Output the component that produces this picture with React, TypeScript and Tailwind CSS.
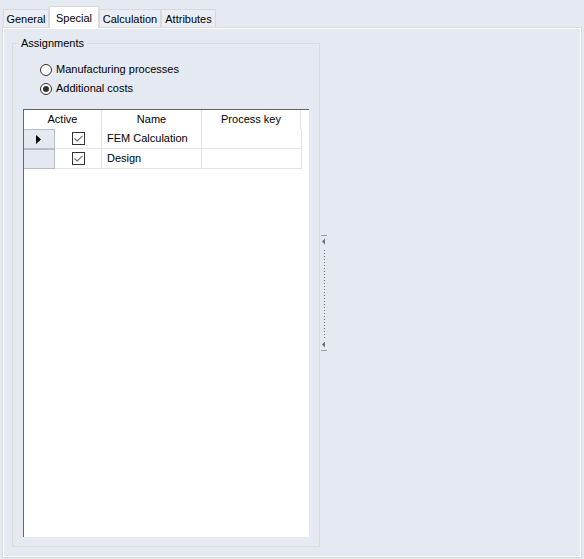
import { useState } from "react";

const tabs = ["General", "Special", "Calculation", "Attributes"];
const tabWidths: Record<string, string> = {
  General: "w-[46px]",
  Special: "w-[50px]",
  Calculation: "w-[62px]",
  Attributes: "w-[55px]",
};

const rows = [
  { name: "FEM Calculation", key: "", active: true, current: true },
  { name: "Design", key: "", active: true, current: false },
];

function Radio({ checked, label }: { checked: boolean; label: string }) {
  return (
    <label className="flex h-[19px] items-center gap-[4px]">
      <span className="flex h-[12px] w-[12px] items-center justify-center rounded-full border border-[#333] bg-white">
        {checked && <span className="h-[6px] w-[6px] rounded-full bg-[#333]" />}
      </span>
      <span>{label}</span>
    </label>
  );
}

function Check() {
  return (
    <span className="flex h-[13px] w-[13px] items-center justify-center border border-[#333] bg-white">
      <svg width="9" height="7" viewBox="0 0 9 7">
        <path d="M0.5 3.5 L3.2 6 L8.5 0.8" fill="none" stroke="#6b6b6b" strokeWidth="1.1" />
      </svg>
    </span>
  );
}

function SplitterGrip() {
  const dots = [];
  for (let y = 15; y <= 102; y += 3) dots.push(<rect key={y} x="4" y={y} width="1" height="1" fill="#6e6e6e" />);
  return (
    <svg width="7" height="117" viewBox="0 0 7 117">
      <rect x="1" y="0" width="6" height="1" fill="#9a9a9a" />
      <path d="M2 6.5 L5 3.5 L5 9.5 Z" fill="#6e6e6e" />
      {dots}
      <path d="M2 109.5 L5 106.5 L5 112.5 Z" fill="#6e6e6e" />
      <rect x="1" y="115" width="6" height="1" fill="#9a9a9a" />
    </svg>
  );
}

export default function App() {
  const [tab, setTab] = useState("Special");
  const [mode, setMode] = useState("costs");

  return (
    <div
      className="flex h-[559px] w-[584px] flex-col bg-[#e5e9f2] text-[11px] text-black"
      style={{ fontFamily: '"Liberation Sans", Arial, sans-serif' }}
    >
      {/* tab strip */}
      <div className="flex h-[27px] items-end pl-[3px]">
        {tabs.map((t) =>
          t === tab ? (
            <button
              key={t}
              onClick={() => setTab(t)}
              className={`${tabWidths[t]} relative z-10 -mb-px flex h-[22px] items-start justify-center border border-b-0 border-[#d9d9d9] bg-white pt-[3px]`}
            >
              {t}
            </button>
          ) : (
            <button
              key={t}
              onClick={() => setTab(t)}
              className={`${tabWidths[t]} flex h-[18px] items-center justify-center border border-b-0 border-[#d9d9d9] bg-[#eaedf4] pt-px`}
            >
              {t}
            </button>
          )
        )}
      </div>

      {/* tab page */}
      <div className="mx-[2px] mb-px flex-1 border border-[#d9d9d9]">
        <div className="flex h-full border border-white pb-[9px] pl-[8px] pt-[14px]">
          {/* group box */}
          <div className="relative flex w-[308px] flex-col border border-[#dcdcdc] px-[10px] pb-[9px]">
            <span className="absolute -top-[7px] left-[6px] bg-[#e5e9f2] px-[2px] leading-[13px]">Assignments</span>
            <div className="mt-[16px] flex flex-col pl-[17px]">
              <div onClick={() => setMode("mfg")}>
                <Radio checked={mode === "mfg"} label="Manufacturing processes" />
              </div>
              <div onClick={() => setMode("costs")}>
                <Radio checked={mode === "costs"} label="Additional costs" />
              </div>
            </div>

            {/* grid */}
            <div className="mt-[11px] flex-1 border-l border-t border-[#646464] bg-white">
              <div className="flex h-[19px] w-[277px] items-center">
                <div className="w-[77px] text-center">Active</div>
                <div className="flex h-full w-[100px] items-center justify-center border-l border-[#e3e3e3]">Name</div>
                <div className="flex h-full w-[100px] items-center justify-center border-x border-[#e3e3e3]">Process key</div>
              </div>
              {rows.map((r) => (
                <div key={r.name} className="flex h-[20px] w-[278px]">
                  <div className="flex w-[31px] items-center border border-l-0 border-[#b8bcc6] bg-[#e3e8f1] pl-[12px]">
                    {r.current && (
                      <svg width="5" height="9" viewBox="0 0 5 9">
                        <path d="M0 0 L5 4.5 L0 9 Z" fill="#000" />
                      </svg>
                    )}
                  </div>
                  <div className="flex w-[46px] items-center justify-center border-b border-[#e3e3e3]">
                    <Check />
                  </div>
                  <div className="flex w-[100px] items-center border-b border-l border-[#e3e3e3] pl-[5px]">{r.name}</div>
                  <div className="w-[101px] border-x border-b border-[#e3e3e3]">{r.key}</div>
                </div>
              ))}
            </div>
          </div>

          {/* splitter */}
          <div className="flex items-center pb-[4px]">
            <SplitterGrip />
          </div>
        </div>
      </div>
    </div>
  );
}
